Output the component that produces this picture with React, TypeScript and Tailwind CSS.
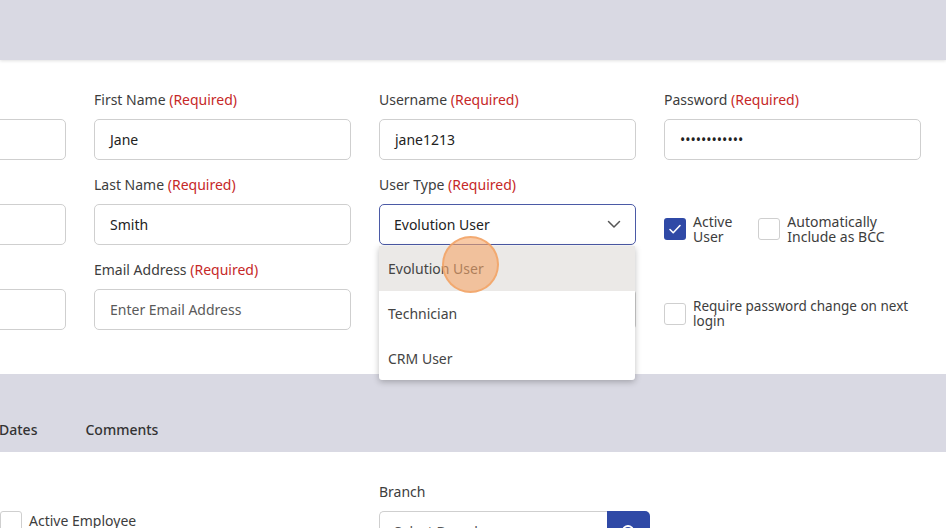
import React from "react";

const labelCls = "h-5 leading-5 text-[14px] text-[#3d3d3d] mb-[9px] whitespace-nowrap";
const inputCls =
  "h-[41px] w-full rounded-[5px] border border-[#cfcfcf] bg-white px-[15px] flex items-center text-[14px] text-[#222]";

function Req() {
  return <span className="text-[#c62828]">(Required)</span>;
}

function Field({ label, required, value, placeholder }: { label: string; required?: boolean; value?: string; placeholder?: string }) {
  return (
    <div>
      <div className={labelCls}>
        {label} {required && <Req />}
      </div>
      <div className={inputCls}>
        {value ? value : <span className="text-[#5a5a5a]">{placeholder}</span>}
      </div>
    </div>
  );
}

function Check({ checked }: { checked?: boolean }) {
  return checked ? (
    <div className="w-[22px] h-[22px] shrink-0 rounded-[3px] bg-[#2f49a6] flex items-center justify-center">
      <svg width="14" height="14" viewBox="0 0 14 14" fill="none">
        <path d="M2 7.5l3.2 3.2L12 3.5" stroke="white" strokeWidth="1.6" strokeLinecap="round" strokeLinejoin="round" />
      </svg>
    </div>
  ) : (
    <div className="w-[22px] h-[22px] shrink-0 rounded-[3px] border border-[#cfcfcf] bg-white" />
  );
}

export default function App() {
  return (
    <div className="w-[946px] h-[528px] overflow-hidden bg-white relative" style={{ fontFamily: '"Noto Sans", "Open Sans", sans-serif' }}>
      <div className="h-[60px] bg-[#d9d9e3] shadow-[0_1px_3px_rgba(0,0,0,0.12)] relative z-10" />

      <div className="h-[314px] pt-[30px]">
        <div className="ml-[-191px] grid grid-cols-[257px_257px_257px_257px] gap-x-[28px] gap-y-[15px]">
          <div>
            <div className={labelCls}>&nbsp;</div>
            <div className={inputCls} />
          </div>
          <Field label="First Name" required value="Jane" />
          <Field label="Username" required value="jane1213" />
          <Field label="Password" required value="••••••••••••" />

          <div>
            <div className={labelCls}>&nbsp;</div>
            <div className={inputCls} />
          </div>
          <Field label="Last Name" required value="Smith" />
          <div className="relative">
            <div className={labelCls}>
              User Type <Req />
            </div>
            <div className="h-[41px] w-full rounded-[5px] border-[1.5px] border-[#4b5aa6] bg-white px-[14px] flex items-center justify-between text-[14px] text-[#222]">
              <span>Evolution User</span>
              <svg width="14" height="9" viewBox="0 0 14 9" fill="none">
                <path d="M1.5 1.5L7 7l5.5-5.5" stroke="#555" strokeWidth="1.5" strokeLinecap="round" strokeLinejoin="round" />
              </svg>
            </div>
            <div className="absolute left-0 top-[71px] w-[256px] z-20 bg-white rounded-b-[3px] shadow-[0_2px_6px_rgba(0,0,0,0.25)] text-[14px] text-[#444]">
              <div className="h-[45px] bg-[#ebe9e7] px-[9px] flex items-center relative">
                Evolution User
                <div className="absolute left-[63px] top-[-10px] w-[57px] h-[57px] rounded-full bg-[#f5a66a]/60 border-2 border-[#f2a264]/80" />
              </div>
              <div className="h-[45px] px-[9px] flex items-center">Technician</div>
              <div className="h-[44px] px-[9px] flex items-center">CRM User</div>
            </div>
          </div>
          <div>
            <div className={labelCls}>&nbsp;</div>
            <div className="h-[41px] pt-[8px] flex items-center text-[14px] text-[#3d3d3d] leading-[15px]">
              <div className="flex items-center gap-[7px]">
                <Check checked />
                <span>
                  Active
                  <br />
                  User
                </span>
              </div>
              <div className="flex items-center gap-[7px] ml-[26px]">
                <Check />
                <span>
                  Automatically
                  <br />
                  Include as BCC
                </span>
              </div>
            </div>
          </div>

          <div>
            <div className={labelCls}>&nbsp;</div>
            <div className={inputCls} />
          </div>
          <Field label="Email Address" required placeholder="Enter Email Address" />
          <div>
            <div className={labelCls}>&nbsp;</div>
            <div className={inputCls} />
          </div>
          <div>
            <div className={labelCls}>&nbsp;</div>
            <div className="h-[41px] pt-[8px] flex items-center gap-[7px] text-[14px] text-[#3d3d3d] leading-[15px]">
              <Check />
              <span className="text-[13.5px]">
                Require password change on next
                <br />
                login
              </span>
            </div>
          </div>
        </div>
      </div>

      <div className="h-[78px] bg-[#d9d9e3] flex items-end">
        <div className="h-[45px] flex items-center text-[14px] font-medium text-[#333] ml-[-1px]">
          <span>Dates</span>
          <span className="ml-[48px]">Comments</span>
        </div>
      </div>

      <div className="pt-[30px] ml-[-191px] grid grid-cols-[257px_257px_257px_257px] gap-x-[28px]">
        <div className="flex items-start gap-[7px] pt-[29px] col-start-1 col-end-2 ml-[191px] w-[300px] text-[14px] text-[#3d3d3d]">
          <Check />
          <span className="leading-5">Active Employee</span>
        </div>
        <div />
        <div className="col-start-3">
          <div className={labelCls}>Branch</div>
          <div className="flex h-[41px] w-[271px]">
            <div className="flex-1 rounded-l-[5px] border border-r-0 border-[#cfcfcf] px-[14px] flex items-center justify-between text-[14px] text-[#555]">
              <span>Select Branch</span>
              <svg width="12" height="8" viewBox="0 0 14 9" fill="none">
                <path d="M1.5 1.5L7 7l5.5-5.5" stroke="#777" strokeWidth="1.5" strokeLinecap="round" />
              </svg>
            </div>
            <div className="w-[43px] rounded-r-[5px] bg-[#2f49a6] flex items-center justify-center">
              <svg width="16" height="16" viewBox="0 0 16 16" fill="none">
                <circle cx="7" cy="7" r="5" stroke="white" strokeWidth="2" />
                <path d="M11 11l3.5 3.5" stroke="white" strokeWidth="2" strokeLinecap="round" />
              </svg>
            </div>
          </div>
        </div>
      </div>
    </div>
  );
}
